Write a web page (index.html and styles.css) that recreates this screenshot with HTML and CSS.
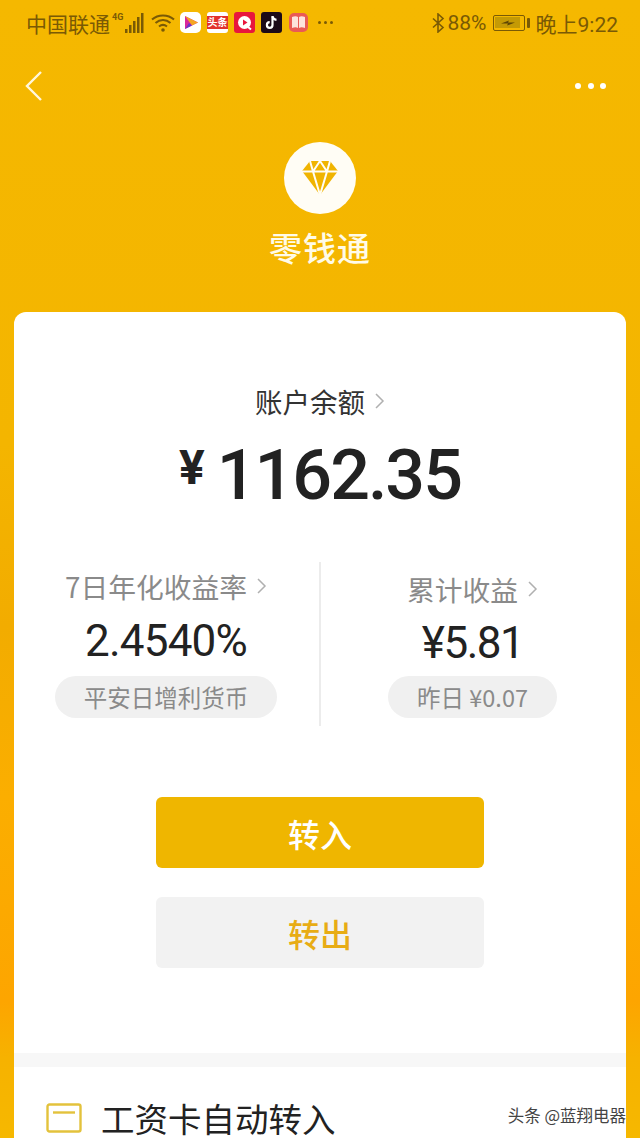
FILE: index.html
```html
<!DOCTYPE html>
<html lang="zh">
<head>
<meta charset="utf-8">
<title>零钱通</title>
<link rel="stylesheet" href="styles.css">
</head>
<body>
<div class="screen">
  <header class="statusbar">
    <div class="status-left">
      <span class="carrier">中国联通</span>
      <svg class="signal" width="34" height="22" viewBox="0 0 34 22">
        <text x="0" y="8" class="net">4G</text>
        <g fill="#7a5a05"><rect x="13" y="17" width="2.500" height="4"/><rect x="17" y="13" width="2.500" height="8"/><rect x="21" y="9" width="2.500" height="12"/><rect x="25" y="5" width="2.500" height="16"/><rect x="29" y="1" width="2.500" height="20"/></g>
      </svg>
      <svg class="wifi" width="24" height="20" viewBox="0 0 24 20" fill="none" stroke="#7a5a05" stroke-width="2">
        <path d="M1 6.500C7 1 17 1 23 6.500"/><path d="M4.500 10C9 6 15 6 19.500 10"/><path d="M8 13.500C10.500 11.500 13.500 11.500 16 13.500"/><circle cx="12" cy="17" r="1.800" fill="#7a5a05" stroke="none"/>
      </svg>
      <div class="apps">
        <span class="app app-video"><svg width="21" height="21" viewBox="0 0 21 21"><path d="M5 4l13 6.500L5 17z" fill="#d9279a"/><path d="M5 4l13 6.500-6 3z" fill="#f5a623"/><path d="M5 17l4-6 3 2.500z" fill="#6a35c9"/></svg></span>
        <span class="app app-news"><span class="news-text">头条</span></span>
        <span class="app app-q"><svg width="21" height="21" viewBox="0 0 21 21"><circle cx="10.500" cy="10.500" r="6.500" fill="#fff"/><path d="M9 7.500l4.500 3-4.500 3z" fill="#e8163d"/><path d="M14 15l3 2.500" stroke="#fff" stroke-width="2"/></svg></span>
        <span class="app app-tiktok"><svg width="21" height="21" viewBox="0 0 21 21" fill="none" stroke="#fff" stroke-width="2.200"><path d="M11.500 4v9a2.800 2.800 0 1 1-2.800-2.800"/><path d="M11.500 4.500c.5 2 2 3.200 4 3.400"/></svg></span>
        <span class="app app-book"><svg width="19" height="19" viewBox="0 0 19 19"><path d="M3 4c2.500-1 4.500-1 6 0v11c-1.500-1-3.500-1-6 0zM10 4c1.500-1 3.500-1 6 0v11c-2.500-1-4.500-1-6 0z" fill="#fde3dc"/></svg></span>
      </div>
      <span class="more-status"><i></i><i></i><i></i></span>
    </div>
    <div class="status-right">
      <svg width="14" height="20" viewBox="0 0 14 20" fill="none" stroke="#7a5a05" stroke-width="1.600"><path d="M2 5.500l10 9-5 4.500V1l5 4.500-10 9"/></svg>
      <span class="pct">88%</span>
      <span class="battery"><span class="battery-fill"><svg width="16" height="8" viewBox="0 0 16 8"><path d="M1 4.500L9 1.500 8 3.500h7L7 6.500l1-2z" fill="#5d4504"/></svg></span></span>
      <span class="battery-tip"></span>
      <span class="clock">晚上9:22</span>
    </div>
  </header>

  <nav class="navbar">
    <svg width="20" height="32" viewBox="0 0 20 32" fill="none" stroke="#fff7dc" stroke-width="2.400"><path d="M17 2L3 16l14 14"/></svg>
    <div class="dots"><i></i><i></i><i></i></div>
  </nav>

  <section class="brand">
    <div class="logo">
      <svg width="38" height="36" viewBox="0 0 38 36">
        <path d="M9 1h20l8 10-18 24L1 11z" fill="#f0b400"/>
        <path d="M1 11.500h36M12 11.500L19 35l7-23.500M9 1l3 10.500L19 1l7 10.500L29 1" fill="none" stroke="#fffdf5" stroke-width="2"/>
      </svg>
    </div>
    <h1 class="brand-name">零钱通</h1>
  </section>

  <main class="card">
    <section class="balance">
      <a class="balance-label">账户余额<svg class="chev" width="10" height="18" viewBox="0 0 10 18"><path d="M1 2l7 7-7 7" fill="none" stroke="#b0b0b0" stroke-width="1.500"/></svg></a>
      <div class="balance-value"><span class="yen">¥</span>1162.35</div>
    </section>

    <section class="stats">
      <div class="stat stat-a">
        <div class="stat-label">7日年化收益率<svg class="chev" width="10" height="18" viewBox="0 0 10 18"><path d="M1 2l7 7-7 7" fill="none" stroke="#b0b0b0" stroke-width="1.500"/></svg></div>
        <div class="stat-value">2.4540%</div>
        <div class="pill">平安日增利货币</div>
      </div>
      <div class="stat stat-b">
        <div class="stat-label">累计收益<svg class="chev" width="10" height="18" viewBox="0 0 10 18"><path d="M1 2l7 7-7 7" fill="none" stroke="#b0b0b0" stroke-width="1.500"/></svg></div>
        <div class="stat-value">¥5.81</div>
        <div class="pill">昨日 ¥0.07</div>
      </div>
    </section>

    <section class="actions">
      <button class="btn btn-in">转入</button>
      <button class="btn btn-out">转出</button>
    </section>

    <div class="band"></div>

    <section class="row">
      <svg width="36" height="30" viewBox="0 0 36 30" fill="none" stroke="#e3c23c" stroke-width="2.400"><rect x="1.500" y="1.500" width="33" height="27" rx="2"/><path d="M7 9.500h22"/></svg>
      <span class="row-title">工资卡自动转入</span>
    </section>
  </main>

  <div class="watermark">头条 @蓝翔电器</div>
</div>
</body>
</html>
```

FILE: styles.css
```css
* { box-sizing: border-box; }
html, body { margin: 0; padding: 0; }
body {
  width: 640px;
  height: 1138px;
  overflow: hidden;
  font-family: "Noto Sans CJK SC", "Noto Sans", sans-serif;
}
.screen {
  position: relative;
  width: 640px;
  height: 1138px;
  overflow: hidden;
  background: linear-gradient(180deg, #f5b800 0%, #f4b500 39%, #f2ac00 55%, #fbae00 70%, #fda500 88%, #f6b200 93%, #f6b800 100%);
  display: flex;
  flex-direction: column;
}
.statusbar {
  height: 45px;
  padding: 0 22px 0 26px;
  display: flex;
  justify-content: space-between;
  align-items: center;
  color: #7a5a05;
  font-family: "Roboto", "Noto Sans CJK SC", sans-serif;
}
.status-left, .status-right { display: flex; align-items: center; }
.carrier { font: 21px/28px "Noto Sans CJK SC", sans-serif; white-space: nowrap; }
.signal { margin-left: 2px; }
.net { font: 700 9px "Roboto", sans-serif; fill: #7a5a05; }
.wifi { margin-left: 5px; }
.apps { display: flex; gap: 6px; margin-left: 5px; align-items: center; }
.app { width: 21px; height: 21px; border-radius: 3px; display: flex; align-items: center; justify-content: center; overflow: hidden; }
.app-video { background: #fff; border-radius: 5px; }
.app-news { background: #fff; }
.news-text { display: block; width: 21px; background: #e2322d; color: #fff; font-size: 10px; line-height: 13px; text-align: center; font-weight: 700; white-space: nowrap; }
.app-q { background: #e8163d; }
.app-tiktok { background: #1c0a18; }
.app-book { background: #ea5a55; border-radius: 5px; width: 19px; height: 19px; margin-left: 1px; }
.more-status { display: flex; gap: 3px; margin-left: 10px; }
.more-status i { display: block; width: 3px; height: 3px; border-radius: 50%; background: #7a5a05; }
.pct { margin-left: 3px; font-size: 21px; }
.battery { margin-left: 6px; width: 32px; height: 16px; border: 1.500px solid #7a5a05; border-radius: 2px; padding: 1.500px; display: flex; }
.battery-fill { width: 25px; background: #c49a05; display: flex; align-items: center; justify-content: center; }
.battery-tip { width: 3px; height: 10px; background: #7a5a05; margin-left: 2px; border-radius: 1px; }
.clock { margin-left: 6px; font-size: 21px; }
.navbar {
  height: 82px;
  padding: 0 34px 0 24px;
  display: flex;
  justify-content: space-between;
  align-items: center;
}
.dots { display: flex; gap: 6.500px; }
.dots i { display: block; width: 6px; height: 6px; border-radius: 50%; background: #fff; }
.brand { display: flex; flex-direction: column; align-items: center; padding-top: 15px; }
.logo {
  width: 72px; height: 72px; border-radius: 50%; background: #fffdf5;
  display: flex; align-items: center; justify-content: center;
}
.brand-name { margin: 10px 0 0; font-size: 33px; line-height: 46px; font-weight: 500; color: #fffbe8; letter-spacing: 1px; }
.card {
  margin: 42px 14px 0;
  flex: 1;
  background: #fff;
  border-radius: 12px 12px 0 0;
  display: flex;
  flex-direction: column;
}
.balance { display: flex; flex-direction: column; align-items: center; padding-top: 71px; }
.balance-label { font-size: 27.500px; line-height: 36px; color: #333; display: flex; align-items: center; gap: 10px; }
.balance-value {
  margin-top: 20px;
  font-family: "Roboto", sans-serif;
  font-size: 70px; line-height: 72px; font-weight: 500; color: #222; letter-spacing: -2px;
  display: flex; align-items: center;
}
.yen { font-size: 48px; margin-right: 14px; margin-top: -14px; font-weight: 700; }
.stats { position: relative; display: flex; margin-top: 51px; height: 164px; }
.stats::before { content: ""; position: absolute; left: 305px; top: 0; bottom: 0; width: 2px; background: #ececec; }
.stat { display: flex; flex-direction: column; align-items: center; }
.stat-a { width: 304px; }
.stat-b { flex: 1; padding-left: 1px; }
.stat-label { font-size: 27.750px; line-height: 36px; color: #8a8a8a; display: flex; align-items: center; gap: 10px; margin-top: 6px; }
.stat-b .stat-label { margin-top: 9px; }
.stat-value { font-family: "Roboto", sans-serif; font-size: 44px; line-height: 52px; letter-spacing: -0.800px; color: #222; margin-top: 11px; }
.pill {
  height: 42px; line-height: 42px; border-radius: 21px; background: #f0f0f0; color: #8a8a8a;
  font-size: 23.500px; margin-top: 9px; padding: 0 29px;
}
.stat-b .stat-value { margin-top: 10px; letter-spacing: -1.500px; }
.stat-b .pill { margin-top: 7px; }
.actions { display: flex; flex-direction: column; align-items: center; gap: 29px; margin-top: 71px; }
.btn {
  width: 328px; height: 71px; border: 0; border-radius: 6px;
  font: 500 32px/1 "Noto Sans CJK SC", sans-serif; padding: 0;
}
.btn-in { background: #efb600; color: #fff; }
.btn-out { background: #f2f2f2; color: #e8ac14; }
.band { height: 14px; background: #f7f7f7; margin-top: 85px; flex: none; }
.row { display: flex; align-items: center; gap: 19px; padding: 33px 0 0 32px; }
.row-title { font-size: 33.500px; line-height: 36px; color: #222; white-space: nowrap; }
.watermark {
  position: absolute; right: 14px; bottom: 13px;
  font-size: 16.500px; line-height: 20px; color: #444;
  text-shadow: 0 0 2px #fff;
}
```
